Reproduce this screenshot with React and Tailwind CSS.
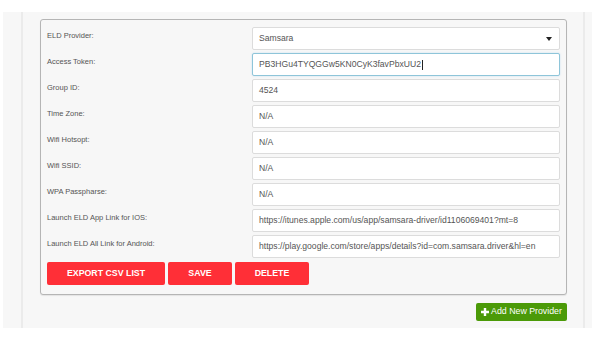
import React from "react";

const rows = [
  ["ELD Provider:", "Samsara", "select"],
  ["Access Token:", "PB3HGu4TYQGGw5KN0CyK3favPbxUU2", "focus"],
  ["Group ID:", "4524"],
  ["Time Zone:", "N/A"],
  ["Wifi Hotsopt:", "N/A"],
  ["Wifi SSID:", "N/A"],
  ["WPA Passpharse:", "N/A"],
  ["Launch ELD App Link for IOS:", "https://itunes.apple.com/us/app/samsara-driver/id1106069401?mt=8"],
  ["Launch ELD All Link for Android:", "https://play.google.com/store/apps/details?id=com.samsara.driver&hl=en"],
];

function Field({ value, kind }) {
  if (kind === "select") {
    return (
      <div className="flex h-[23px] w-[308px] items-center justify-between rounded-[2px] border border-[#dcdcdc] bg-white pl-[6px] pr-[7px] text-[8.6px] text-[#555]">
        <span>{value}</span>
        <svg width="6" height="4" viewBox="0 0 6 4">
          <path d="M0 0 H6 L3 4 Z" fill="#222" />
        </svg>
      </div>
    );
  }
  if (kind === "focus") {
    return (
      <div className="flex h-[23px] w-[308px] items-center rounded-[2px] border border-[#8ec5d9] bg-white pl-[6px] text-[8.6px] text-[#555] shadow-[0_0_2px_rgba(102,175,233,0.35)]">
        <span>{value}</span>
        <span className="ml-px h-[10px] w-px bg-[#222]" />
      </div>
    );
  }
  return (
    <div className="flex h-[23px] w-[308px] items-center rounded-[2px] border border-[#dcdcdc] bg-white pl-[6px] text-[8.6px] text-[#555]">
      <span className="whitespace-nowrap">{value}</span>
    </div>
  );
}

export default function App() {
  return (
    <div
      className="h-[339px] w-[592px] bg-white pl-[3px] pt-[12px]"
      style={{ fontFamily: '"Liberation Sans", Arial, sans-serif' }}
    >
      <div className="flex h-[316px] bg-[#f7f7f7]">
        <div className="w-[20px] border-r-2 border-[#ebebeb]" />
        <div className="w-[560px] pl-[17px] pr-[16px] pt-[7px]">
          <div className="w-[527px] rounded-[3px] border border-[#b5b5b5] bg-[#f7f7f7] pb-[9px] pl-[6px] pr-[6px] pt-[7px] shadow-[0_1px_1px_rgba(0,0,0,0.08)]">
            <div className="flex flex-col gap-[3px]">
              {rows.map(([label, value, kind]) => (
                <div key={label} className="flex">
                  <div className="w-[205px] pt-[4px] text-[7.5px] leading-[10px] text-[#555]">
                    {label}
                  </div>
                  <Field value={value} kind={kind} />
                </div>
              ))}
            </div>
            <div className="mt-[4px] flex gap-[3px]">
              <button className="h-[23px] w-[118px] rounded-[2px] bg-[#ff2f37] text-[8.8px] font-bold text-white">
                EXPORT CSV LIST
              </button>
              <button className="h-[23px] w-[64px] rounded-[2px] bg-[#ff2f37] text-[8.8px] font-bold text-white">
                SAVE
              </button>
              <button className="h-[23px] w-[74px] rounded-[2px] bg-[#ff2f37] text-[8.8px] font-bold text-white">
                DELETE
              </button>
            </div>
          </div>
          <div className="mt-[8px] flex justify-end">
            <button className="flex h-[18px] w-[91px] items-center justify-center gap-[2px] rounded-[2px] bg-[#4b9a08] text-[8.8px] text-white">
              <svg width="8" height="8" viewBox="0 0 8 8">
                <path d="M2.8 0 H5.2 V2.8 H8 V5.2 H5.2 V8 H2.8 V5.2 H0 V2.8 H2.8 Z" fill="#fff" />
              </svg>
              <span>Add New Provider</span>
            </button>
          </div>
        </div>
        <div className="flex-1 border-l-2 border-[#ebebeb]" />
      </div>
    </div>
  );
}
